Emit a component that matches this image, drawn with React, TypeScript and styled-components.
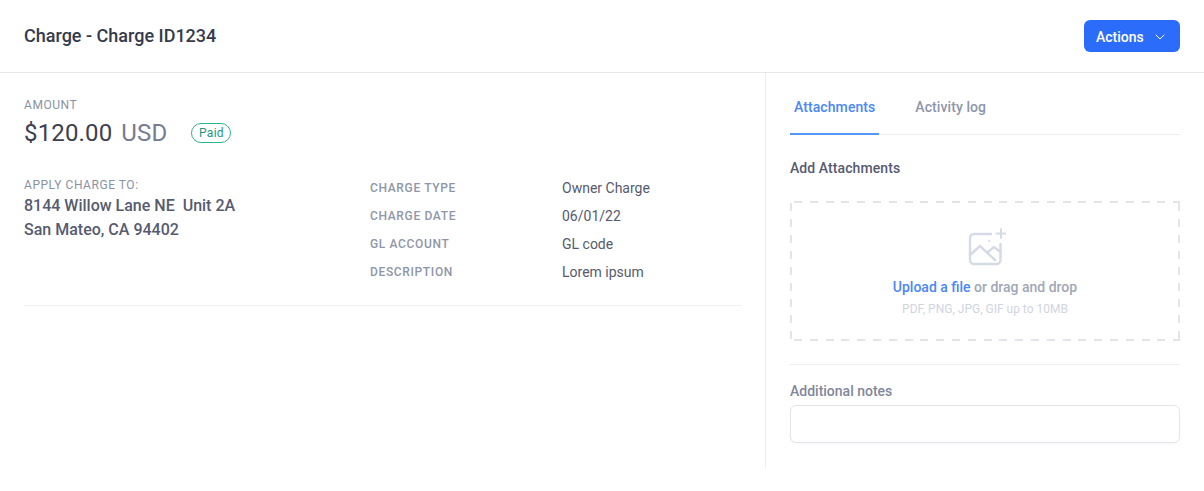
import React from 'react'
import styled, { createGlobalStyle } from 'styled-components'
import { FiChevronDown } from 'react-icons/fi'

const GlobalStyle = createGlobalStyle`
  html, body {
    margin: 0;
    padding: 0;
    background: #fff;
  }
  body {
    font-family: Roboto, "Liberation Sans", sans-serif;
    color: #374151;
  }
  * {
    box-sizing: border-box;
  }
`

const Page = styled.div`
  width: 1204px;
  height: 491px;
  overflow: hidden;
`

const Header = styled.header`
  display: flex;
  align-items: center;
  justify-content: space-between;
  height: 73px;
  padding: 0 24px;
  border-bottom: 1px solid #e5e7eb;
`

const Title = styled.h1`
  margin: 0;
  font-size: 18px;
  line-height: 24px;
  font-weight: 500;
  color: #353a4c;
`

const ActionsButton = styled.button`
  display: flex;
  align-items: center;
  justify-content: space-between;
  width: 96px;
  height: 32px;
  padding: 1px 12px 0;
  border: 0;
  border-radius: 6px;
  background: #2c6cfb;
  color: #fff;
  font-family: inherit;
  font-size: 14px;
  font-weight: 500;
`

const Body = styled.div`
  display: flex;
  height: 395px;
`

const Details = styled.section`
  width: 765px;
  padding: 24px 23px 0 24px;
  flex: none;
`

const Summary = styled.div`
  height: 209px;
  border-bottom: 1px solid #f0f1f4;
`

const SmallLabel = styled.div`
  font-size: 12px;
  line-height: 16px;
  letter-spacing: 0.55px;
  color: #8a92a6;
`

const AmountRow = styled.div`
  display: flex;
  align-items: center;
  height: 32px;
  margin-top: 4px;
`

const Amount = styled.span`
  font-size: 24px;
  line-height: 32px;
  font-weight: 400;
  letter-spacing: 0.15px;
  color: #3d404f;
`

const Currency = styled.span`
  margin-left: 9px;
  font-size: 24px;
  line-height: 32px;
  font-weight: 400;
  letter-spacing: 0.2px;
  color: #767c90;
`

const Badge = styled.span`
  display: inline-flex;
  align-items: center;
  justify-content: center;
  width: 40px;
  height: 20px;
  margin-left: 24px;
  border: 1px solid #2cb592;
  border-radius: 10px;
  font-size: 12px;
  font-weight: 400;
  letter-spacing: 0.3px;
  color: #1f9580;
`

const Columns = styled.div`
  display: flex;
  margin-top: 28px;
`

const ApplyTo = styled.div`
  width: 346px;
  flex: none;
`

const Address = styled.div`
  margin-top: 1px;
  font-size: 16px;
  line-height: 24px;
  font-weight: 500;
  color: #565b70;
`

const Facts = styled.dl`
  display: grid;
  grid-template-columns: 192px 1fr;
  grid-auto-rows: 28px;
  margin: -3px 0 0;
`

const FactName = styled.dt`
  display: flex;
  align-items: center;
  font-size: 12px;
  font-weight: 500;
  letter-spacing: 0.65px;
  color: #8f96a9;
`

const FactValue = styled.dd`
  display: flex;
  align-items: center;
  margin: 0;
  font-size: 14px;
  color: #555a6d;
`

const Side = styled.aside`
  flex: 1;
  height: 395px;
  padding: 0 24px 0 24px;
  border-left: 1px solid #eceef1;
`

const Tabs = styled.div`
  display: flex;
  height: 62px;
  gap: 32px;
  border-bottom: 1px solid #eceef1;
`

const Tab = styled.div<{ $active?: boolean }>`
  display: flex;
  align-items: center;
  height: 62px;
  padding: 8px 4px 0;
  font-size: 14px;
  font-weight: 500;
  letter-spacing: 0.08px;
  color: ${p => (p.$active ? '#4a87f6' : '#8f96a9')};
  border-bottom: 2px solid ${p => (p.$active ? '#5397f8' : 'transparent')};
`

const SectionTitle = styled.h2`
  margin: 23px 0 0;
  font-size: 14px;
  line-height: 20px;
  font-weight: 500;
  letter-spacing: 0.08px;
  color: #565b70;
`

// the dashes are longer than a browser's own 2px dashed border
const dashX = 'repeating-linear-gradient(90deg, transparent 0 4px, #e2e4eb 4px 12px, transparent 12px 15.8px)'
const dashY = 'repeating-linear-gradient(180deg, transparent 0 2px, #e2e4eb 2px 10px, transparent 10px 16px)'

const DropZone = styled.div`
  display: flex;
  flex-direction: column;
  align-items: center;
  height: 140px;
  margin-top: 23px;
  padding-top: 27px;
  background-image: ${dashX}, ${dashX}, ${dashY}, ${dashY};
  background-size: 100% 2px, 100% 2px, 2px 100%, 2px 100%;
  background-position: 0 0, 0 100%, 0 0, 100% 0;
  background-repeat: no-repeat;
`

const DropText = styled.div`
  margin-top: 9px;
  font-size: 14px;
  line-height: 20px;
  font-weight: 500;
  color: #a1a7b8;
`

const UploadLink = styled.span`
  color: #4a87f6;
`

const DropHint = styled.div`
  margin-top: 4px;
  font-size: 12px;
  line-height: 16px;
  color: #d0d5e2;
`

const Divider = styled.hr`
  margin: 23px 0 0;
  border: 0;
  border-top: 1px solid #eceef1;
`

const NotesLabel = styled.label`
  display: block;
  margin-top: 16px;
  font-size: 14px;
  line-height: 20px;
  font-weight: 500;
  color: #81879b;
`

const NotesInput = styled.input`
  display: block;
  width: 100%;
  height: 38px;
  margin-top: 4px;
  border: 1px solid #e2e4ee;
  border-radius: 6px;
  outline: 0;
  box-shadow: 0 1px 2px rgba(0, 0, 0, 0.04);
`

const ImagePlusIcon = () => (
  <svg width="42" height="40" viewBox="0 0 42 40" fill="none" stroke="#d5dbe6" strokeWidth="2.4" strokeLinecap="round" strokeLinejoin="round">
    <g transform="translate(4 0)">
      <path d="M23 6H6a4 4 0 0 0-4 4v22a4 4 0 0 0 4 4h22.5a4 4 0 0 0 4-4V16" />
      <path d="M2 27l10-9 15 14" />
      <path d="M20 24l6-5 6.5 5" />
      <path d="M33 1v9M28.5 5.5h9" strokeWidth="2" />
      <circle cx="21" cy="13" r="0.5" strokeWidth="1" />
    </g>
  </svg>
)

const facts = [
  ['CHARGE TYPE', 'Owner Charge'],
  ['CHARGE DATE', '06/01/22'],
  ['GL ACCOUNT', 'GL code'],
  ['DESCRIPTION', 'Lorem ipsum']
]

const App = () => {
  return (
    <Page>
      <GlobalStyle />
      <Header>
        <Title>Charge - Charge ID1234</Title>
        <ActionsButton>
          Actions
          <FiChevronDown size={16} strokeWidth={1.5} />
        </ActionsButton>
      </Header>
      <Body>
        <Details>
          <Summary>
            <SmallLabel>AMOUNT</SmallLabel>
            <AmountRow>
              <Amount>$120.00</Amount>
              <Currency>USD</Currency>
              <Badge>Paid</Badge>
            </AmountRow>
            <Columns>
              <ApplyTo>
                <SmallLabel>APPLY CHARGE TO:</SmallLabel>
                <Address>
                  8144 Willow Lane NE&nbsp; Unit 2A
                  <br />
                  San Mateo, CA 94402
                </Address>
              </ApplyTo>
              <Facts>
                {facts.map(([name, value]) => (
                  <React.Fragment key={name}>
                    <FactName>{name}</FactName>
                    <FactValue>{value}</FactValue>
                  </React.Fragment>
                ))}
              </Facts>
            </Columns>
          </Summary>
        </Details>
        <Side>
          <Tabs>
            <Tab $active>Attachments</Tab>
            <Tab>Activity log</Tab>
          </Tabs>
          <SectionTitle>Add Attachments</SectionTitle>
          <DropZone>
            <ImagePlusIcon />
            <DropText>
              <UploadLink>Upload a file</UploadLink> or drag and drop
            </DropText>
            <DropHint>PDF, PNG, JPG, GIF up to 10MB</DropHint>
          </DropZone>
          <Divider />
          <NotesLabel>Additional notes</NotesLabel>
          <NotesInput />
        </Side>
      </Body>
    </Page>
  )
}

export default App
